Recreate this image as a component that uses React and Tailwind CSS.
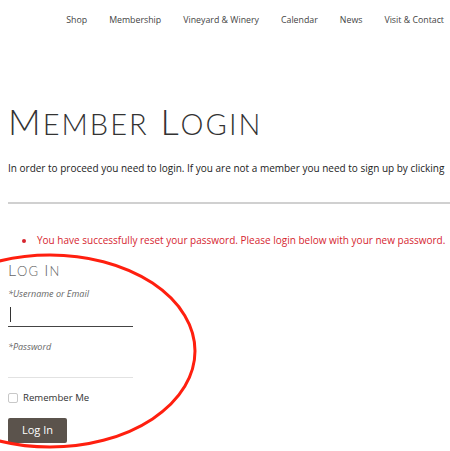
import React from "react";

const navItems = ["Shop", "Membership", "Vineyard & Winery", "Calendar", "News", "Visit & Contact"];

const App = () => {
  return (
    <div className="relative w-[450px] h-[451px] overflow-hidden bg-white font-['Open_Sans',sans-serif] text-[#333]">
      {/* Top navigation */}
      <nav className="flex justify-end gap-[22px] pr-[6px] pt-[14px] text-[8.8px] text-[#444]">
        {navItems.map((item) => (
          <span key={item}>{item}</span>
        ))}
      </nav>

      {/* Page title */}
      <h1 className="mt-[76px] ml-[8px] font-['Lato',sans-serif] font-light text-[36px] leading-none text-[#333] tracking-[2px] whitespace-nowrap">
        M<span className="text-[29px]">EMBER</span> L<span className="text-[29px]">OGIN</span>
      </h1>

      <p className="mt-[22px] ml-[8px] text-[10px] text-[#222] whitespace-nowrap">
        In order to proceed you need to login. If you are not a member you need to sign up by clicking
      </p>

      <hr className="mt-[26px] ml-[8px] border-t-2 border-[#d0d0d0]" />

      {/* Status message */}
      <ul className="mt-[29px] ml-[22px] list-disc list-inside text-[10px] text-[#d6252f] whitespace-nowrap marker:text-[#d6252f]">
        <li>You have successfully reset your password. Please login below with your new password.</li>
      </ul>

      {/* Login form */}
      <div className="ml-[8px] mt-[14px] w-[125px]">
        <h2 className="font-['Lato',sans-serif] font-light text-[16px] leading-none text-[#666] tracking-[1px]">
          L<span className="text-[13px]">OG</span> I<span className="text-[13px]">N</span>
        </h2>

        <label className="block mt-[9px] text-[9px] italic text-[#666]">*Username or Email</label>
        <div className="mt-[3px] h-[23px] border-b border-[#444] flex items-center">
          <span className="ml-[2px] w-px h-[15px] bg-[#333]" />
        </div>

        <label className="block mt-[13px] text-[9px] italic text-[#666]">*Password</label>
        <div className="mt-[3px] h-[22px] border-b border-[#e2e2e2]" />

        <label className="flex items-center gap-[5px] mt-[13px] text-[9.6px] text-[#333]">
          <span className="w-[10px] h-[10px] rounded-[2px] border border-[#c8c8c8] bg-white" />
          Remember Me
        </label>

        <button className="mt-[12px] w-[59px] h-[25px] rounded-[2px] bg-[#5b534c] text-white text-[11px]">
          Log In
        </button>
      </div>

      {/* Hand-drawn highlight annotation */}
      <svg className="absolute left-0 top-0 pointer-events-none" width="450" height="451">
        <ellipse cx="50" cy="351" rx="145" ry="96" fill="none" stroke="#ff1f0f" strokeWidth="3" />
      </svg>
    </div>
  );
};

export default App;
